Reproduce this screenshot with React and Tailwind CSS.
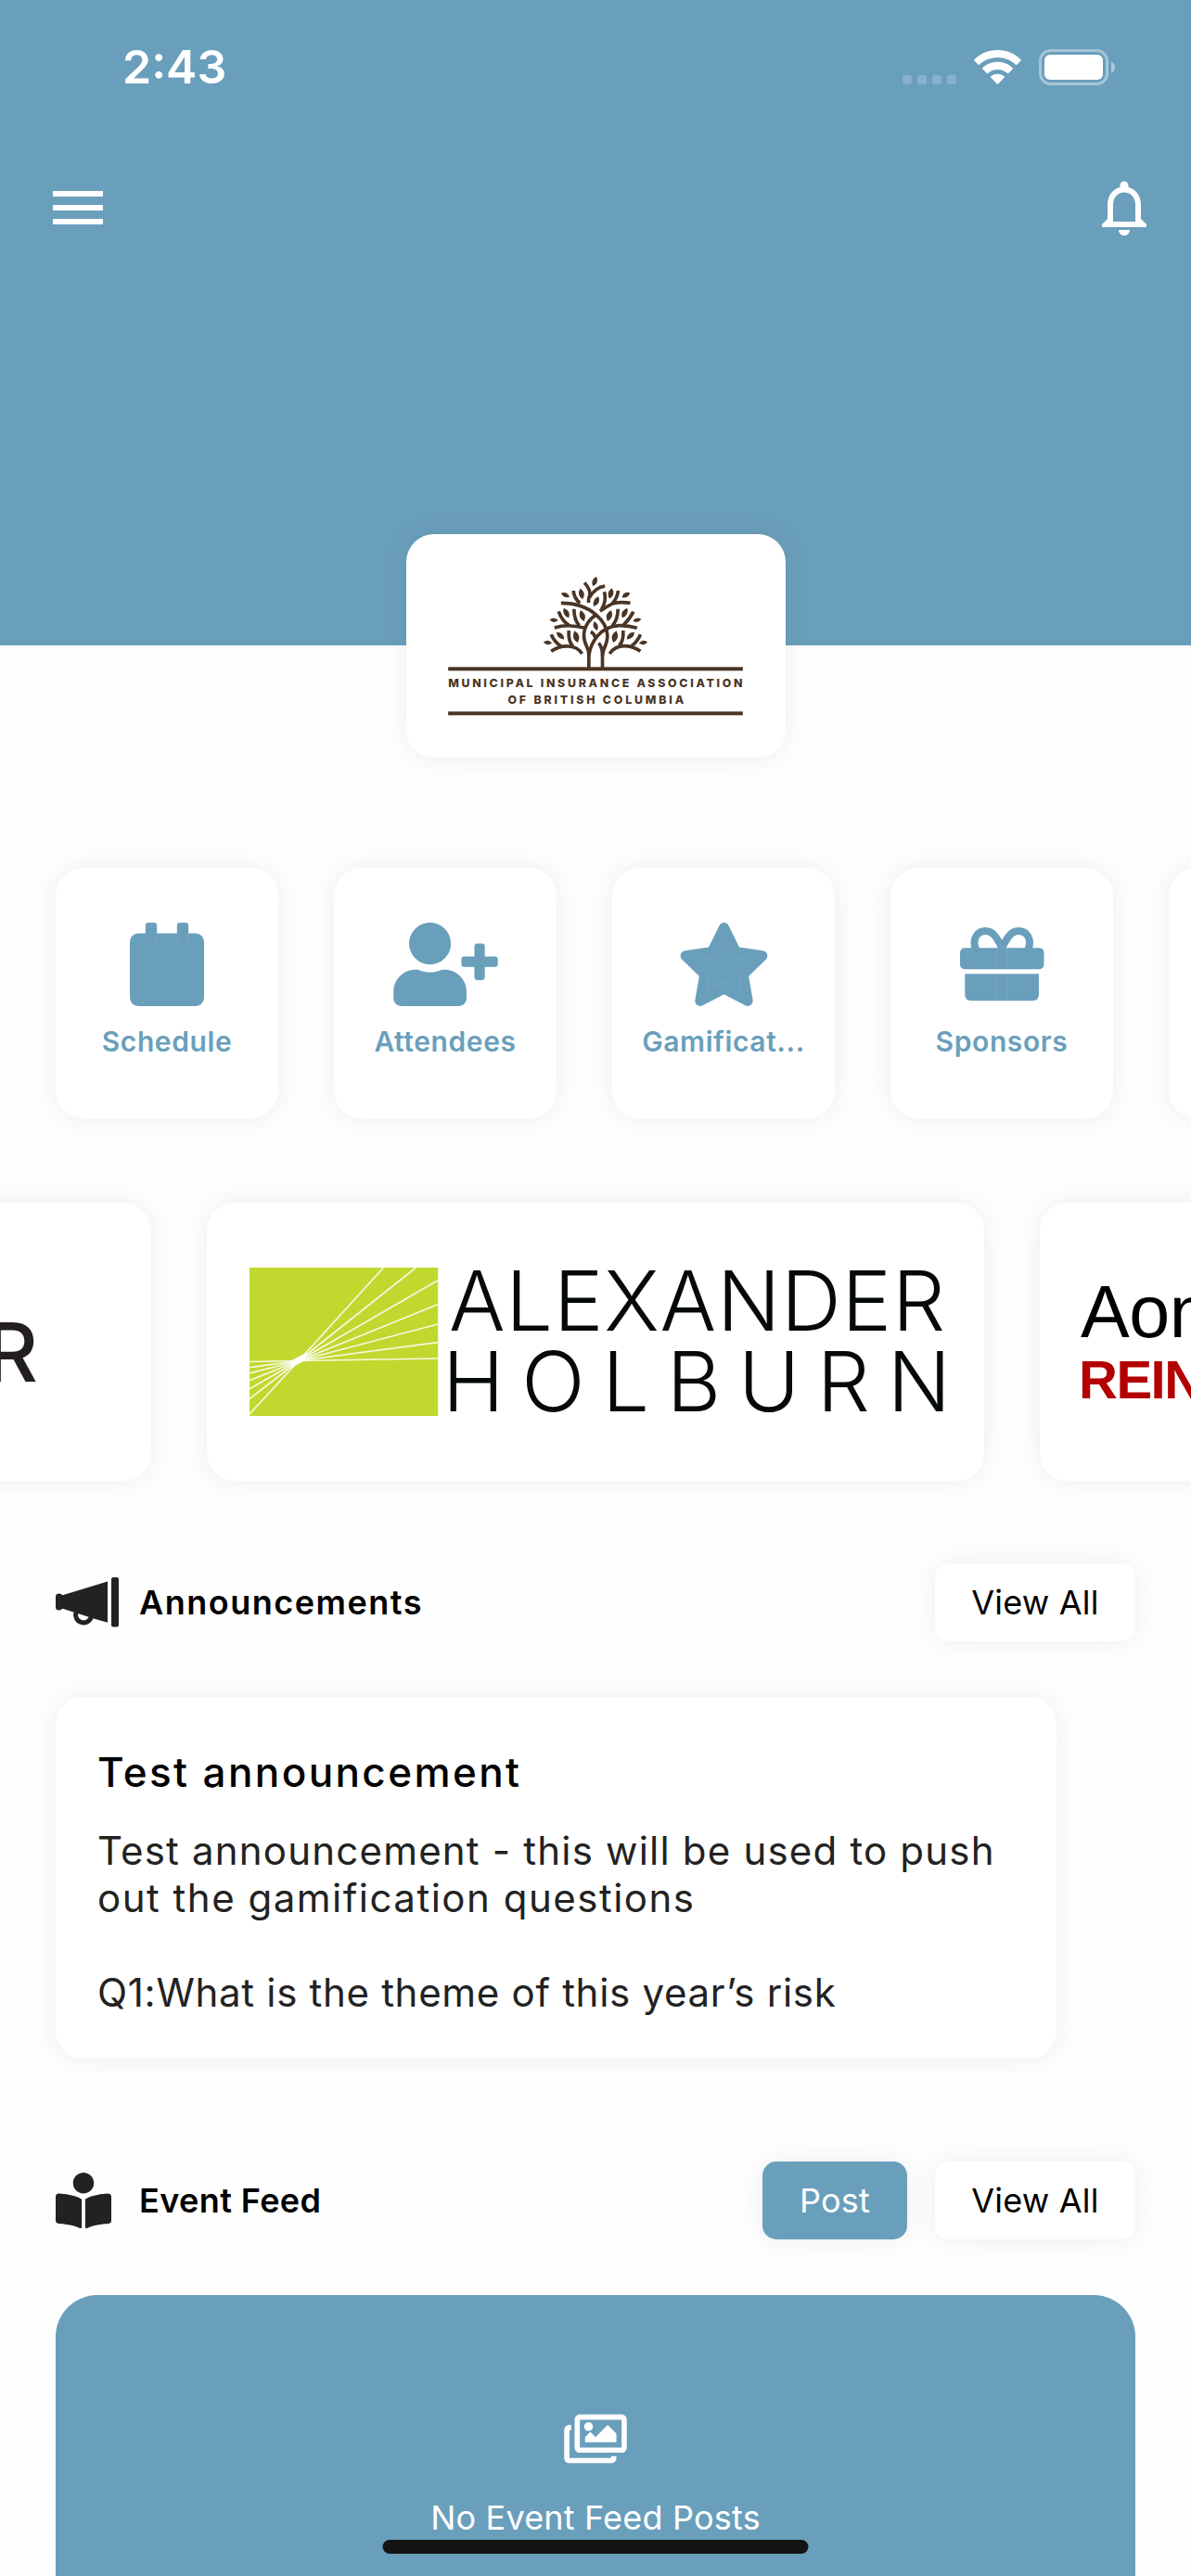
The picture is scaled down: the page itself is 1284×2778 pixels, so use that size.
import React from 'react';
import { FaUserPlus, FaStar, FaBookReader, FaRegImages } from 'react-icons/fa';
import { MdMenu, MdNotificationsNone } from 'react-icons/md';

const CARD = 'bg-white shadow-[0_0_30px_rgba(0,0,0,0.07)]';
const SEAM = '#80adc6';
const BROWN = '#4a3424';

const WifiIcon = () => (
  <svg width="51" height="37" viewBox="0 0 51 37" fill="white">
    <path d="M25.500 0C35.500 0 44.600 4 50.500 10.200q.6.700 0 1.300L46.300 15.700q-.6.500-1.200 0C40 10.800 33 8 25.500 8S11 10.800 5.900 15.700q-.6.500-1.200 0L.5 11.500q-.6-.600 0-1.300C6.400 4 15.500 0 25.500 0Z" />
    <path d="M25.500 12.800c6.300 0 12 2.400 16.200 6.400q.6.600 0 1.200l-4.600 4.500q-.6.500-1.200 0c-2.800-2.500-6.400-3.900-10.400-3.900s-7.600 1.400-10.400 3.900q-.6.500-1.200 0l-4.600-4.500q-.6-.600 0-1.200c4.200-4 9.900-6.400 16.200-6.400Z" />
    <path d="M25.500 25.800c2.800 0 5.400 1 7.300 2.600q.6.600 0 1.200l-6.700 6.900q-.6.500-1.200 0l-6.700-6.900q-.6-.600 0-1.200c1.900-1.600 4.500-2.600 7.300-2.600Z" />
  </svg>
);

const BatteryIcon = () => (
  <svg width="83" height="39" viewBox="0 0 83 39">
    <rect x="1.500" y="1.500" width="72" height="36" rx="11" fill="none" stroke="white" strokeOpacity="0.400" strokeWidth="3" />
    <rect x="6" y="6" width="63" height="27" rx="6" fill="white" />
    <path d="M78 13.500q4 2.200 4 6t-4 6Z" fill="white" fillOpacity="0.450" />
  </svg>
);

const CalendarIcon = () => (
  <svg width="80" height="90" viewBox="0 0 80 90" fill="#6a9fbc">
    <rect y="11.500" width="80" height="78.500" rx="9" />
    <rect x="17" width="12" height="23" rx="3" stroke={SEAM} strokeWidth="0.500" />
    <rect x="51" width="12" height="23" rx="3" stroke={SEAM} strokeWidth="0.500" />
  </svg>
);

const StarIcon = () => (
  <div className="relative flex h-[90px] w-[101px]">
    <FaStar className="h-[90px] w-[101px]" />
    <svg className="absolute left-[3px] top-0" width="95" height="90" viewBox="0 0 95 90">
      <path
        d="M47 21L56 37L74 40L62.500 54L65 72L47 65L30 72L32.500 54L21 40L38 37Z"
        fill="none"
        stroke={SEAM}
        strokeWidth="0.500"
        strokeLinejoin="round"
      />
    </svg>
  </div>
);

const GiftIcon = () => (
  <svg width="91" height="80" viewBox="0 0 91 80" fill="#6a9fbc">
    <g fill="none" stroke="#6a9fbc" strokeWidth="8">
      <path d="M17 24C12.500 12 19 4 27.500 4C36 4 40 12 45.300 22" />
      <path d="M73.500 24C78 12 71.500 4 63 4C54.500 4 50.500 12 45.300 22" />
    </g>
    <rect y="22.300" width="90.500" height="23" rx="5" />
    <path d="M5.300 50.300H85V72.300Q85 79.300 78 79.300H12.300Q5.300 79.300 5.300 72.300Z" />
    <path d="M39.300 22.300V45.300M50.500 22.300V45.300M39.300 50.300V79.300M50.500 50.300V79.300" stroke={SEAM} strokeWidth="0.500" />
  </svg>
);

const MegaphoneIcon = () => (
  <svg width="68" height="54" viewBox="0 0 68 54" fill="#222">
    <rect x="60" width="8" height="53.500" rx="2" />
    <path d="M56 4.600V48.800L41 44.500L7.500 33.800Q6 35.500 3.500 35.500Q0 35.500 0 32V21Q0 17.500 3.500 17.500Q6 17.500 7.500 19.200Z" />
    <path d="M22 37.500A8.200 8.200 0 1 0 38.300 43" fill="none" stroke="#222" strokeWidth="5" />
  </svg>
);

const BRANCHES = [
  'M614 482V438C614 412 597 405 598 375C599 345 618 320 640 308',
  'M658 482V440C659 418 675 405 674 375C672 335 625 270 524 271',
  'M614 440C620 400 650 346 712 344Q742 343 770 352',
  'M658 440Q658 415 646 400',
  'M636 384Q632 370 620 364',
  'M503 351Q545 337 603 352',
  'M516 298Q528 330 550 343',
  'M566 290Q566 325 583 344',
  'M492 427Q520 408 550 411Q578 413 592 435',
  'M492 373Q503 398 525 412',
  'M549 360Q547 395 562 410',
  'M564 231Q566 255 585 272',
  'M600 205Q620 228 617 245Q612 255 613 270',
  'M666 216Q635 220 616 253',
  'M650 297Q668 285 690 273Q715 266 748 271',
  'M709 231Q706 255 690 272',
  'M664 235Q672 265 655 292',
  'M758 299Q745 325 725 343',
  'M708 290Q708 325 690 344',
  'M681 435Q698 410 728 410Q755 410 781 427',
  'M781 373Q770 398 750 412',
  'M725 360Q727 395 712 408',
];

// x, y, half length, rotation
const LEAVES = [
  [633, 201, 17, 20], [538, 245, 15, -65], [590, 241, 18, -12], [685, 240, 18, 12],
  [734, 245, 15, 60], [638, 266, 18, 25], [501, 326, 14, -85], [541, 303, 18, -28],
  [593, 312, 19, -18], [680, 312, 19, 18], [730, 303, 18, 28], [770, 326, 14, 80],
  [636, 345, 16, -18], [481, 399, 14, -85], [522, 377, 17, -48], [573, 380, 20, -15],
  [698, 380, 20, 15], [749, 377, 17, 48], [790, 399, 14, 85],
];

const AssociationLogo = () => (
  <svg width="318" height="152" viewBox="159 180 953 456" fill={BROWN}>
    <g fill="none" stroke={BROWN} strokeWidth="11">
      {BRANCHES.map((d) => (
        <path key={d} d={d} />
      ))}
    </g>
    {LEAVES.map(([x, y, r, deg]) => (
      <path
        key={`${x}-${y}`}
        d={`M0 ${-r}Q${r * 0.95} 0 0 ${r}Q${-r * 0.95} 0 0 ${-r}Z`}
        transform={`translate(${x} ${y}) rotate(${deg})`}
      />
    ))}
    <rect x="159" y="478" width="953" height="12" />
    <rect x="159" y="622" width="953" height="12" />
    <text x="159" y="543" textLength="952" fontFamily="Inter" fontWeight="800" fontSize="37">
      MUNICIPAL INSURANCE ASSOCIATION
    </text>
    <text x="352" y="596" textLength="569" fontFamily="Inter" fontWeight="800" fontSize="37">
      OF BRITISH COLUMBIA
    </text>
  </svg>
);

const RAYS = [
  [144.5, 0], [179.4, 0], [203, 13.7], [203, 39.7], [203, 61], [203, 80.7], [203, 98],
  [0, 101.5], [0, 107.7], [0, 114], [0, 121.7], [0, 130.7], [0, 141.7], [0, 158],
];

const AlexanderHolburnLogo = () => (
  <svg width="750" height="160" viewBox="0 0 750 160">
    <rect width="203.200" height="160" fill="#c1d82f" />
    {RAYS.map(([x, y]) => (
      <path key={`${x}-${y}`} d={`M53 100.500L${x} ${y}`} stroke="white" strokeOpacity="0.850" strokeWidth="1.700" />
    ))}
    <path d="M44 101L62 91L60 100L45 108Z" fill="white" />
    <g fill="#060909" fontFamily="Inter" fontWeight="300" fontSize="90">
      <text x="215" y="68" textLength="535">ALEXANDER</text>
      <text x="208" y="155" textLength="548">HOLBURN</text>
    </g>
  </svg>
);

const tiles = [
  { name: 'Schedule', icon: <CalendarIcon /> },
  { name: 'Attendees', icon: <FaUserPlus className="h-[90px] w-[113px]" /> },
  { name: 'Gamificat...', icon: <StarIcon /> },
  { name: 'Sponsors', icon: <GiftIcon /> },
  { name: '', icon: null },
];

const SectionHeader = ({ icon, title, titleClass, children }) => (
  <div className="flex h-[84px] items-center justify-between">
    <div className="flex items-center">
      <div className="w-[90px]">{icon}</div>
      <h2 className={`text-[36px] font-semibold text-black ${titleClass}`}>{title}</h2>
    </div>
    <div className="flex gap-[30px]">{children}</div>
  </div>
);

const ViewAllButton = () => (
  <button className={`h-[84px] w-[216px] rounded-[15px] text-[36px] tracking-[0.2px] text-black ${CARD}`}>
    View All
  </button>
);

const App = () => {
  return (
    <div className="relative h-[2778px] w-[1284px] overflow-hidden bg-[#fefefe] font-['Inter',sans-serif]">
      <header className="h-[696px] bg-[#6a9fbc] text-white">
        {/* Status bar */}
        <div className="flex h-[144px] items-center justify-between pl-[132px] pr-[81px]">
          <span className="mt-px text-[50px] font-semibold">2:43</span>
          <div className="flex items-center">
            <div className="mr-[19px] mt-[27px] flex gap-[6px]">
              {[0, 1, 2, 3].map((dot) => (
                <span key={dot} className="size-[10px] rounded-[3px] bg-white/20" />
              ))}
            </div>
            <WifiIcon />
            <div className="ml-[19px]">
              <BatteryIcon />
            </div>
          </div>
        </div>
        {/* Navigation */}
        <div className="flex items-center justify-between pl-[48px] pr-[36px] pt-[44px]">
          <MdMenu size={72} />
          <MdNotificationsNone size={72} />
        </div>
      </header>

      <div className={`relative mx-auto -mt-[120px] flex h-[241px] w-[409px] items-center justify-center rounded-[30px] pb-[2px] ${CARD}`}>
        <AssociationLogo />
      </div>

      <nav className="mt-[119px] flex gap-[60px] pl-[60px]">
        {tiles.map((tile) => (
          <div
            key={tile.name}
            className={`flex h-[270px] w-[240px] shrink-0 flex-col items-center rounded-[30px] pt-[59px] text-[#6a9fbc] ${CARD}`}
          >
            <div className="flex h-[90px] items-center">{tile.icon}</div>
            <span className="mt-[18px] text-[30px] font-semibold leading-[40px] tracking-[0.6px]">{tile.name}</span>
          </div>
        ))}
      </nav>

      {/* Sponsor carousel */}
      <div className="-ml-[677px] mt-[91px] flex gap-[60px]">
        <div className={`flex h-[300px] w-[840px] shrink-0 items-center justify-end rounded-[30px] pr-[122px] ${CARD}`}>
          <span className="mt-[21px] text-[88px] font-medium leading-none text-[#231f20]">R</span>
        </div>
        <div className={`flex h-[300px] w-[838px] shrink-0 items-center rounded-[30px] pl-[46px] ${CARD}`}>
          <AlexanderHolburnLogo />
        </div>
        <div className={`flex h-[300px] w-[840px] shrink-0 flex-col rounded-[30px] pl-[44px] pt-[78px] font-['Liberation_Sans',sans-serif] ${CARD}`}>
          <span className="text-[79px] leading-[80px] tracking-[-0.5px] text-black">Aon</span>
          <span className="-ml-[2px] text-[58px] font-bold leading-[66px] tracking-[-1.5px] text-[#b30000]">REINSURANCE</span>
        </div>
      </div>

      <main className="px-[60px]">
        <section className="mt-[89px]">
          <SectionHeader icon={<MegaphoneIcon />} title="Announcements" titleClass="tracking-[1.5px]">
            <ViewAllButton />
          </SectionHeader>
          <article className={`mt-[60px] h-[390px] w-[1079px] rounded-[30px] px-[45px] pt-[51px] ${CARD}`}>
            <h3 className="text-[44px] font-medium leading-[60px] tracking-[2.4px] text-black">Test announcement</h3>
            <div className="mt-[29px] whitespace-nowrap text-[42px] leading-[51px] text-[#222]">
              <p className="tracking-[1.2px]">Test announcement - this will be used to push</p>
              <p className="tracking-[1.5px]">out the gamification questions</p>
              <p className="mt-[51px] tracking-[0.7px]">Q1:What is the theme of this year’s risk</p>
            </div>
          </article>
        </section>

        <section className="mt-[111px]">
          <SectionHeader icon={<FaBookReader size={60} color="#222" />} title="Event Feed" titleClass="tracking-[0.4px]">
            <button className="h-[84px] w-[156px] rounded-[15px] bg-[#6a9fbc] text-[36px] tracking-[0.2px] text-white shadow-[0_0_30px_rgba(0,0,0,0.07)]">
              Post
            </button>
            <ViewAllButton />
          </SectionHeader>
          <div className="mt-[60px] flex h-[420px] flex-col items-center rounded-[45px] bg-[#6a9fbc] pt-[125px] text-white">
            <FaRegImages className="h-[60px] w-[68px]" />
            <span className="mt-[30px] text-[36px] leading-[50px] tracking-[0.2px]">No Event Feed Posts</span>
          </div>
        </section>
      </main>

      {/* Home indicator */}
      <div className="absolute bottom-[24px] left-1/2 h-[15px] w-[459px] -translate-x-1/2 rounded-full bg-[#141414]" />
    </div>
  );
};

export default App;
